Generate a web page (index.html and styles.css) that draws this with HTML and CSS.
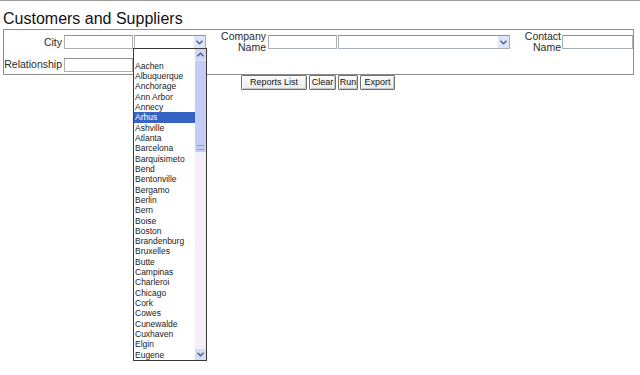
FILE: index.html
```html
<!DOCTYPE html>
<html>
<head>
<meta charset="utf-8">
<link rel="stylesheet" href="styles.css">
</head>
<body>
<div class="topline"></div>
<h1 class="title">Customers and Suppliers</h1>
<div class="panel">
  <div class="row row1">
    <label class="lbl lbl-city">City</label>
    <div class="inp inp-a"></div>
    <div class="sel sel-city"><span class="arrow"><svg width="7" height="5" viewBox="0 0 7 5"><path d="M0.5 0.8 L3.5 3.8 L6.5 0.8" fill="none" stroke="#4a5a8a" stroke-width="1.3"/></svg></span></div>
    <label class="lbl lbl-company">Company<br>Name</label>
    <div class="inp inp-b"></div>
    <div class="sel sel-company"><span class="arrow"><svg width="7" height="5" viewBox="0 0 7 5"><path d="M0.5 0.8 L3.5 3.8 L6.5 0.8" fill="none" stroke="#4a5a8a" stroke-width="1.3"/></svg></span></div>
    <label class="lbl lbl-contact">Contact<br>Name</label>
    <div class="inp inp-c"></div>
  </div>
  <div class="row row2">
    <label class="lbl lbl-city">Relationship</label>
    <div class="inp inp-a"></div>
  </div>
</div>
<div class="buttons">
  <button class="btn btn-reports">Reports List</button>
  <button class="btn btn-clear">Clear</button>
  <button class="btn btn-run">Run</button>
  <button class="btn btn-export">Export</button>
</div>
<div class="dropdown">
  <ul class="options">
    <li>&nbsp;</li>
    <li>Aachen</li>
    <li>Albuquerque</li>
    <li>Anchorage</li>
    <li>Ann Arbor</li>
    <li>Annecy</li>
    <li class="active">Arhus</li>
    <li>Ashville</li>
    <li>Atlanta</li>
    <li>Barcelona</li>
    <li>Barquisimeto</li>
    <li>Bend</li>
    <li>Bentonville</li>
    <li>Bergamo</li>
    <li>Berlin</li>
    <li>Bern</li>
    <li>Boise</li>
    <li>Boston</li>
    <li>Brandenburg</li>
    <li>Bruxelles</li>
    <li>Butte</li>
    <li>Campinas</li>
    <li>Charleroi</li>
    <li>Chicago</li>
    <li>Cork</li>
    <li>Cowes</li>
    <li>Cunewalde</li>
    <li>Cuxhaven</li>
    <li>Elgin</li>
    <li>Eugene</li>
  </ul>
  <div class="scrollbar">
    <div class="sb-btn sb-up"><svg width="7" height="5" viewBox="0 0 7 5"><path d="M0.5 4.2 L3.5 1.2 L6.5 4.2" fill="none" stroke="#4a5a8a" stroke-width="1.3"/></svg></div>
    <div class="sb-thumb"><span class="grip"></span></div>
    <div class="sb-track"></div>
    <div class="sb-btn sb-down"><svg width="7" height="5" viewBox="0 0 7 5"><path d="M0.5 0.8 L3.5 3.8 L6.5 0.8" fill="none" stroke="#4a5a8a" stroke-width="1.3"/></svg></div>
  </div>
</div>
</body>
</html>
```
FILE: styles.css
```css
html, body {
  margin: 0;
  padding: 0;
  background: #ffffff;
  font-family: "Liberation Sans", Arial, sans-serif;
  color: #222;
}
.topline {
  height: 1px;
  background: #9a9a9a;
}
.title {
  margin: 0;
  padding: 8px 0 0 3px;
  height: 20px;
  font-size: 16px;
  font-weight: normal;
  line-height: 20px;
  color: #111;
}
.panel {
  margin: 0 0 0 3px;
  width: 629px;
  height: 43px;
  border: 1px solid #8c8c8c;
  padding: 1px 0 0 0;
  box-sizing: content-box;
}
.row {
  display: flex;
  align-items: center;
}
.row1 {
  height: 22px;
  margin-top: 0;
}
.row2 {
  height: 17px;
  margin-top: 3px;
}
.lbl {
  font-size: 10.5px;
  line-height: 11px;
  text-align: right;
  color: #2a2a2a;
  flex: none;
}
.lbl-city {
  width: 58px;
  margin-right: 2px;
}
.lbl-company {
  width: 60px;
  margin-right: 2px;
}
.lbl-contact {
  width: 51px;
  margin-right: 1px;
}
.inp {
  flex: none;
  height: 14px;
  box-sizing: border-box;
  border: 1px solid #a9b0b8;
  border-top-color: #8c939c;
  background: #fff;
}
.inp-a { width: 69px; margin-right: 1px; }
.inp-b { width: 69px; margin-right: 1px; }
.inp-c { width: 71px; }
.sel {
  flex: none;
  height: 14px;
  box-sizing: border-box;
  border: 1px solid #a9b0b8;
  border-top-color: #8c939c;
  background: #fff;
  display: flex;
  justify-content: flex-end;
}
.sel-city { width: 72px; }
.sel-company { width: 172px; }
.arrow {
  width: 11px;
  height: 12px;
  background: #dde5f7;
  display: flex;
  align-items: center;
  justify-content: center;
}
.buttons {
  display: flex;
  justify-content: center;
  gap: 2px;
  padding: 0 4px 0 0;
  margin-top: 0;
}
.btn {
  font-family: "Liberation Sans", Arial, sans-serif;
  font-size: 9px;
  height: 15px;
  line-height: 11px;
  padding: 0;
  margin: 0;
  color: #111;
  background: linear-gradient(#fbfbfb, #ececec);
  border: 1px solid #6f6f6f;
  box-shadow: inset 1px 1px 0 #ffffff, inset -1px -1px 0 #c9c9c9;
  border-radius: 1px;
}
.btn-reports { width: 66px; }
.btn-clear { width: 27px; }
.btn-run { width: 20px; }
.btn-export { width: 35px; }
.dropdown {
  position: absolute;
  left: 133px;
  top: 48px;
  width: 74px;
  height: 313px;
  box-sizing: border-box;
  border: 1px solid #3a3a3a;
  background: #fff;
  display: flex;
  overflow: hidden;
}
.options {
  list-style: none;
  margin: 0;
  padding: 1.5px 0 0 0;
  width: 61px;
  flex: none;
}
.options li {
  height: 10.32px;
  line-height: 10.32px;
  font-size: 8.5px;
  padding-left: 1px;
  color: #222;
  white-space: nowrap;
}
.options li.active {
  background: #3663c4;
  color: #fff;
}
.scrollbar {
  width: 11px;
  flex: none;
  display: flex;
  flex-direction: column;
  background: #f4eff6;
}
.sb-btn {
  height: 11px;
  flex: none;
  background: #cdd6f6;
  display: flex;
  align-items: center;
  justify-content: center;
}
.sb-thumb {
  height: 91px;
  flex: none;
  background: #c3ccf4;
  border-top: 1px solid #dfe5fb;
  position: relative;
}
.grip {
  position: absolute;
  left: 2px;
  right: 2px;
  bottom: 2px;
  height: 3px;
  border-top: 1px solid #8e9ad0;
  border-bottom: 1px solid #8e9ad0;
}
.sb-track {
  flex: 1;
}
.sb-down {
  background: #d6dcf4;
}
```
